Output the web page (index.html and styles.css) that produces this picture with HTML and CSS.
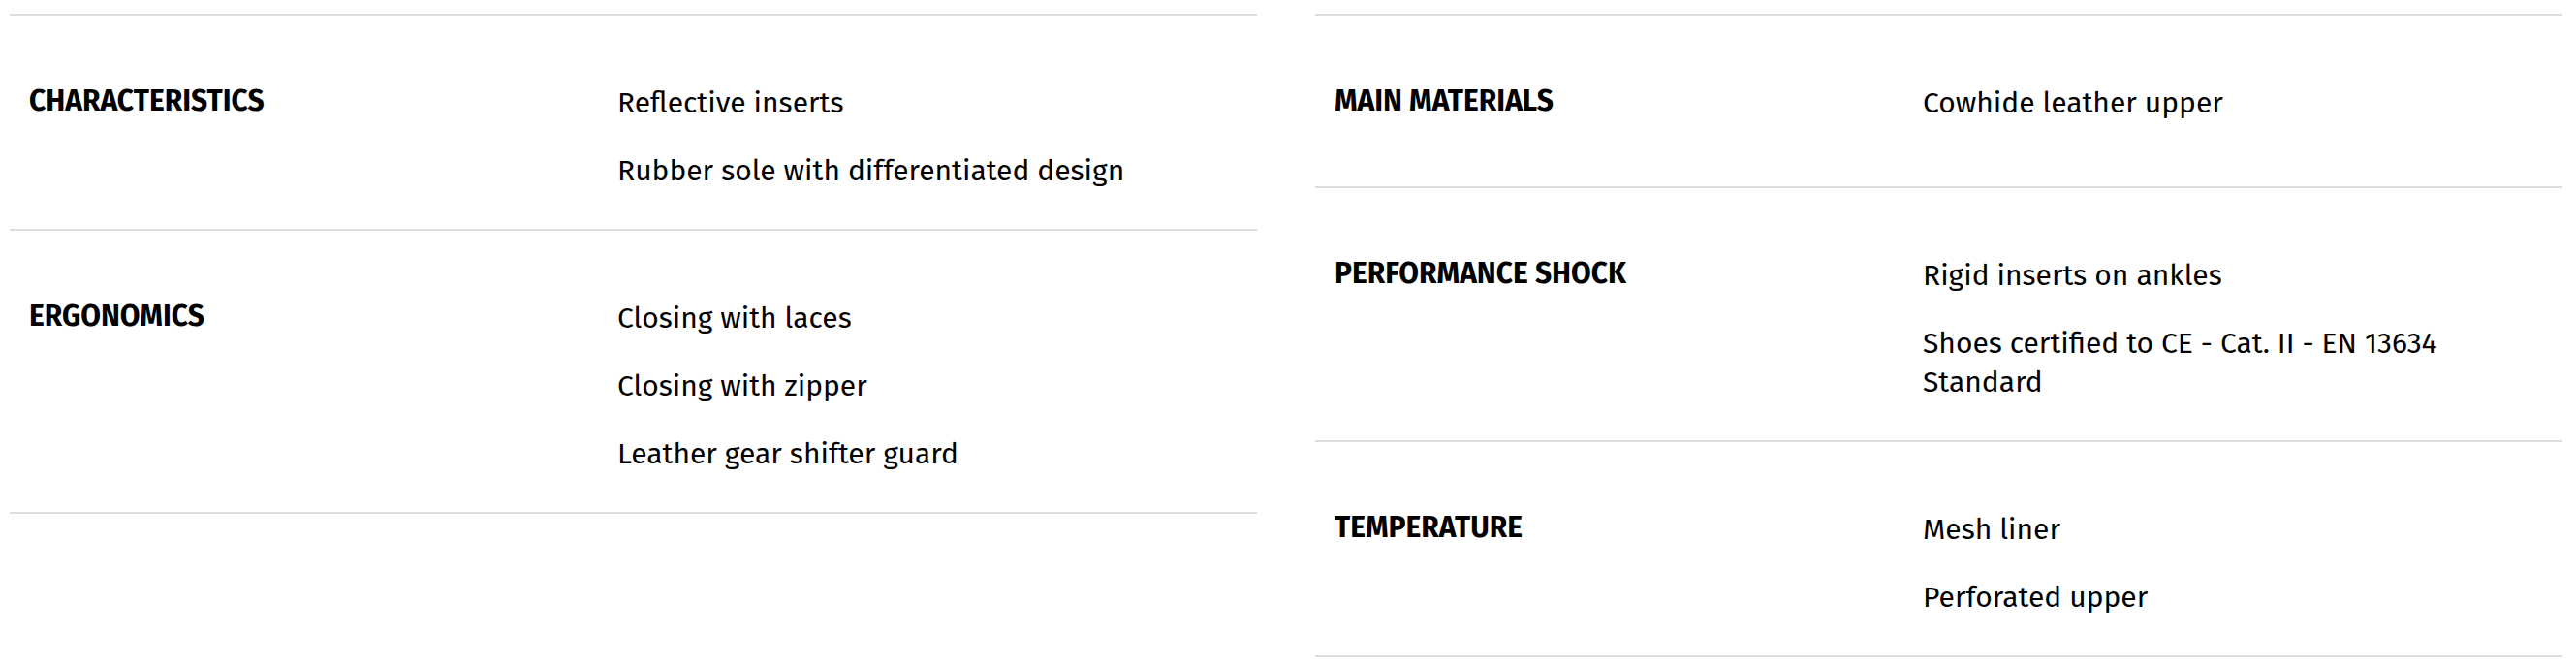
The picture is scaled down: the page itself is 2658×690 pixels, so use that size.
FILE: index.html
```html
<!DOCTYPE html>
<html lang="en">
<head>
<meta charset="utf-8">
<title>Specifications</title>
<link rel="stylesheet" href="styles.css">
</head>
<body>
<div class="specs">
  <div class="table">
    <div class="row">
      <div class="label">CHARACTERISTICS</div>
      <ul class="values">
        <li>Reflective inserts</li>
        <li>Rubber sole with differentiated design</li>
      </ul>
    </div>
    <div class="row">
      <div class="label">ERGONOMICS</div>
      <ul class="values">
        <li>Closing with laces</li>
        <li>Closing with zipper</li>
        <li>Leather gear shifter guard</li>
      </ul>
    </div>
  </div>
  <div class="table">
    <div class="row">
      <div class="label">MAIN MATERIALS</div>
      <ul class="values">
        <li>Cowhide leather upper</li>
      </ul>
    </div>
    <div class="row">
      <div class="label">PERFORMANCE SHOCK</div>
      <ul class="values">
        <li>Rigid inserts on ankles</li>
        <li>Shoes certified to CE - Cat. II - EN 13634 Standard</li>
      </ul>
    </div>
    <div class="row">
      <div class="label">TEMPERATURE</div>
      <ul class="values">
        <li>Mesh liner</li>
        <li>Perforated upper</li>
      </ul>
    </div>
  </div>
</div>
</body>
</html>
```
FILE: styles.css
```css
html, body {
  margin: 0;
  padding: 0;
  background: #fff;
}

body {
  font-family: "Fira Sans", "Open Sans", sans-serif;
  color: #000;
}

.specs {
  display: grid;
  grid-template-columns: 1287px 1287px;
  column-gap: 60px;
  align-items: start;
  padding: 14px 0 0 10px;
}

.table {
  border-top: 2px solid #dddddd;
}

.row {
  display: grid;
  grid-template-columns: 627px 1fr;
  border-bottom: 2px solid #dddddd;
}

.label {
  padding: 68px 20px 68px 20px;
  font-size: 30px;
  line-height: 40px;
  font-weight: 700;
}

.values {
  list-style: none;
  margin: 0;
  padding: 70px 60px 40px 0;
}

.values li {
  font-size: 30px;
  line-height: 40px;
  margin-bottom: 30px;
}

.values li:last-child {
  margin-bottom: 0;
}
```
